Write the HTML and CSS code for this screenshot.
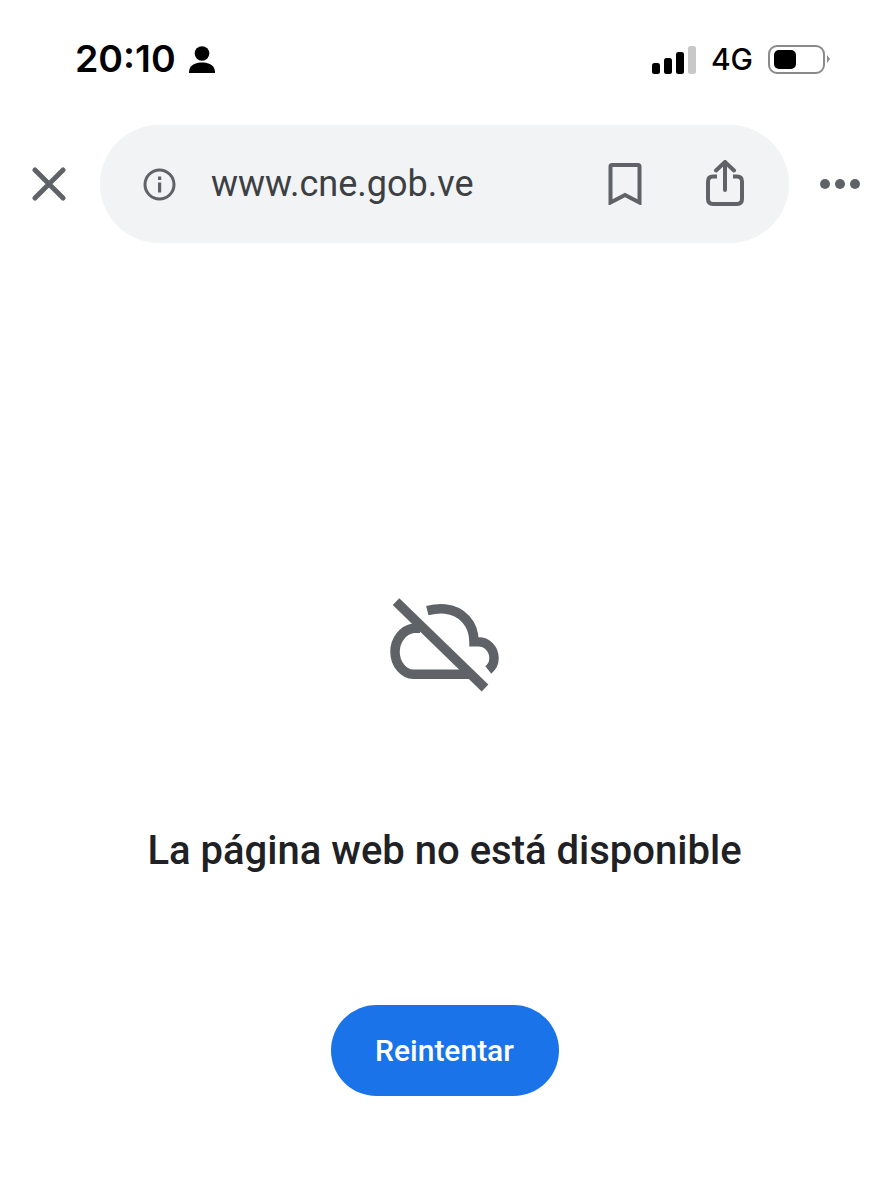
FILE: index.html
```html
<!DOCTYPE html>
<html lang="es">
<head>
    <meta charset="utf-8">
    <title>www.cne.gob.ve</title>
    <link rel="stylesheet" href="styles.css">
</head>
<body>
    <header class="status">
        <div class="status-left">
            <span class="time">20:10</span>
            <svg class="person" width="28" height="28" viewBox="0 0 28 28">
                <circle cx="14" cy="8.5" r="7.3"/>
                <path d="M1 28c0-1 0-3 1-5 2-4 7-5.500 12-5.500s10 1.500 12 5.500c1 2 1 4 1 5z"/>
            </svg>
        </div>
        <div class="status-right">
            <div class="signal">
                <i class="bar b1"></i><i class="bar b2"></i><i class="bar b3"></i><i class="bar b4"></i>
            </div>
            <span class="net">4G</span>
            <div class="battery"><div class="battery-level"></div></div>
            <div class="battery-tip"></div>
        </div>
    </header>

    <nav class="toolbar">
        <button class="tool close">
            <svg width="34" height="34" viewBox="0 0 34 34">
                <path d="M3 3l28 28M31 3L3 31" stroke="#5f6368" stroke-width="5" stroke-linecap="round"/>
            </svg>
        </button>
        <div class="omnibox">
            <svg class="info" width="33" height="33" viewBox="0 0 33 33">
                <circle cx="16.500" cy="16.500" r="14.500" fill="none" stroke="#5f6368" stroke-width="3"/>
                <rect x="15" y="14.500" width="3.200" height="10" fill="#5f6368"/>
                <rect x="15" y="8.500" width="3.200" height="3.500" fill="#5f6368"/>
            </svg>
            <span class="url">www.cne.gob.ve</span>
            <svg class="bookmark" width="34" height="42" viewBox="0 0 34 42">
                <path d="M2.500 39.500V3.500q0-1.500 1.500-1.500h26q1.500 0 1.500 1.500v36L17 32z" fill="none" stroke="#5f6368" stroke-width="4"/>
            </svg>
            <svg class="share" width="38" height="46" viewBox="0 0 38 46">
                <path d="M19 30V3M10 10.500l9-8.500 9 8.500" fill="none" stroke="#5f6368" stroke-width="4" stroke-linecap="round"/>
                <path d="M11 16.500H7q-5 0-5 5V39q0 5 5 5h24q5 0 5-5V21.500q0-5-5-5h-4" fill="none" stroke="#5f6368" stroke-width="4"/>
            </svg>
        </div>
        <div class="dots"><i></i><i></i><i></i></div>
    </nav>

    <main class="error-page">
        <svg class="cloud-off" width="118" height="102" viewBox="0 0 118 102">
            <g fill="none" stroke="#5f6368" stroke-width="9.500">
                <path d="M41.300 16.700C46 15.500 53 14.500 59 15 76 16.500 88 30 88 47.700h4.300C101 47.700 108 55 108 64.300c0 4.500-2 8.700-5.700 11.700"/>
                <path d="M34 34.300h-6.700C17 36 9 46 9 57.700 9 70.500 18 80.300 27.300 80.300h58.400"/>
                <path d="M10 7.700L99 94"/>
            </g>
        </svg>
        <h1 class="title">La página web no está disponible</h1>
        <button class="retry">Reintentar</button>
    </main>
</body>
</html>
```

FILE: styles.css
```css
* {
    box-sizing: border-box;
}
body {
    margin: 0;
    background: #fff;
    font-family: Roboto, sans-serif;
    color: #202124;
}
button {
    border: 0;
    padding: 0;
    background: none;
    font: inherit;
}

/* status bar */
.status {
    display: flex;
    justify-content: space-between;
    align-items: center;
    height: 125px;
    padding: 0 59px 6px 75px;
    height: 125px;
    padding-bottom: 6px;
    align-items: flex-start;
    padding-top: 37px;
}
.status-left, .status-right {
    display: flex;
    align-items: center;
}
.time {
    font: 600 37.500px/44px Inter, sans-serif;
    color: #000;
}
.person {
    margin-left: 12px;
    fill: #000;
}
.signal {
    display: flex;
    align-items: flex-end;
    gap: 4px;
    height: 29px;
}
.bar {
    width: 8px;
    border-radius: 2.500px;
    background: #000;
}
.b1 { height: 11px; }
.b2 { height: 16px; }
.b3 { height: 22px; }
.b4 { height: 28px; background: #c8c8c8; }
.net {
    margin-left: 15px;
    font: 500 30px/44px Inter, sans-serif;
    color: #000;
}
.battery {
    width: 57px;
    height: 29px;
    margin-left: 15px;
    padding: 3px 4px;
    border: 2px solid #8a8a8a;
    border-radius: 9px;
}
.battery-level {
    width: 22px;
    height: 100%;
    border-radius: 5px;
    background: #000;
}
.battery-tip {
    width: 0;
    height: 0;
    margin-left: 2px;
    border-left: 3px solid #8a8a8a;
    border-top: 4px solid transparent;
    border-bottom: 4px solid transparent;
}

/* browser toolbar */
.toolbar {
    display: flex;
    align-items: center;
    height: 118px;
    padding-left: 32px;
}
.tool {
    display: flex;
    width: 68px;
}
.omnibox {
    display: flex;
    align-items: center;
    width: 689px;
    height: 118px;
    padding-left: 43px;
    border-radius: 59px;
    background: #f1f3f4;
}
.url {
    width: 397px;
    margin-left: 35px;
    font-size: 36px;
    color: #3c4043;
}
.share {
    margin-left: 64px;
    margin-bottom: 2px;
}
.dots {
    display: flex;
    gap: 5px;
    margin-left: 31px;
}
.dots i {
    width: 10px;
    height: 10px;
    border-radius: 50%;
    background: #5f6368;
}

/* error message */
.error-page {
    display: flex;
    flex-direction: column;
    align-items: center;
    padding-top: 351px;
}
.title {
    margin: 130px 0 0;
    font-size: 40px;
    line-height: 50px;
    font-weight: 500;
}
.retry {
    width: 228px;
    height: 91px;
    margin-top: 129px;
    border-radius: 46px;
    background: #1a73e8;
    color: #fff;
    font-size: 30px;
    font-weight: 500;
}
```
